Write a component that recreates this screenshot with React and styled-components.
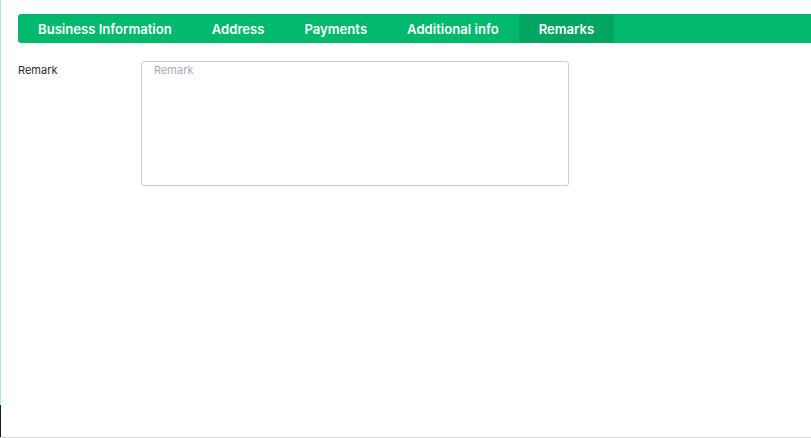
import React from "react";
import styled, { createGlobalStyle } from "styled-components";

const Global = createGlobalStyle`
  html, body { margin: 0; padding: 0; background: #fff; }
  body { font-family: Inter, "Noto Sans", sans-serif; }
  * { box-sizing: border-box; }
`;

const Page = styled.div`
  display: flex;
  width: 811px;
  height: 438px;
  border-bottom: 1px solid #d4d2e0;
  overflow: hidden;
`;

const Rail = styled.div`
  display: flex;
  flex-direction: column;
  width: 1px;
  flex: none;
`;

const RailPart = styled.div`
  width: 1px;
  height: ${(p) => (p.$h ? `${p.$h}px` : "auto")};
  flex: ${(p) => (p.$h ? "none" : "1")};
  background: ${(p) => p.$color};
`;

const Main = styled.div`
  flex: 1;
  padding: 14px 0 0 17px;
  min-width: 0;
`;

const TabBar = styled.div`
  display: flex;
  height: 29px;
  background: #00b96f;
  border-radius: 3px 0 0 3px;
  margin-right: -20px;
`;

const Tab = styled.div`
  display: flex;
  align-items: center;
  padding: 0 20px;
  color: #fff;
  font-size: 13.1px;
  font-weight: 600;
  white-space: nowrap;
  background: ${(p) => (p.$active ? "#03a564" : "transparent")};
`;

const Row = styled.div`
  display: grid;
  grid-template-columns: 123px 428px;
  margin-top: 18px;
`;

const Label = styled.label`
  font-size: 11px;
  color: #2a2a35;
  padding-top: 2px;
`;

const TextArea = styled.textarea`
  width: 428px;
  height: 125px;
  border: 1px solid #cdcbdb;
  border-radius: 3px;
  padding: 1px 12px;
  font-family: Inter, "Noto Sans", sans-serif;
  font-size: 11px;
  resize: none;
  outline: none;
  &::placeholder { color: #a9a8ba; }
`;

const tabs = ["Business Information", "Address", "Payments", "Additional info", "Remarks"];

export default function App() {
  return (
    <>
      <Global />
      <Page>
        <Rail>
          <RailPart $h={405} $color="#b4eadb" />
          <RailPart $color="#1b1b1b" />
        </Rail>
        <Main>
          <TabBar>
            {tabs.map((t) => (
              <Tab key={t} $active={t === "Remarks"}>{t}</Tab>
            ))}
          </TabBar>
          <Row>
            <Label>Remark</Label>
            <TextArea placeholder="Remark" />
          </Row>
        </Main>
      </Page>
    </>
  );
}
